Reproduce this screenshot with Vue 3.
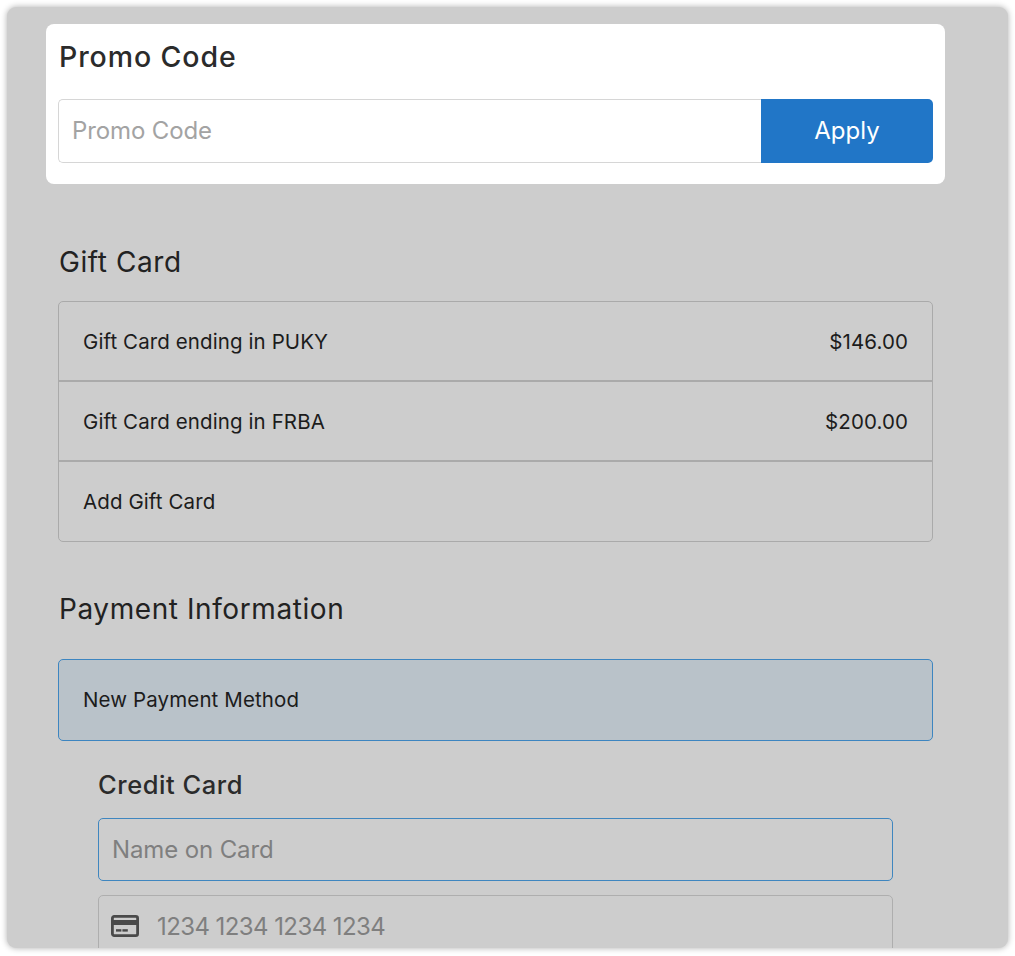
<script setup>
const giftCards = [
  { label: 'Gift Card ending in PUKY', amount: '$146.00' },
  { label: 'Gift Card ending in FRBA', amount: '$200.00' },
  { label: 'Add Gift Card', amount: '' }
]
</script>

<template>
  <div class="page">
    <main class="window">
      <section class="promo">
        <h2 class="promo-title">Promo Code</h2>
        <div class="promo-row">
          <div class="field promo-field"><span class="placeholder light">Promo Code</span></div>
          <button class="apply" type="button">Apply</button>
        </div>
      </section>

      <section class="content">
        <h2 class="section-title gift-title">Gift Card</h2>
        <ul class="gift-list">
          <li v-for="card in giftCards" :key="card.label" class="gift-row">
            <span>{{ card.label }}</span>
            <span>{{ card.amount }}</span>
          </li>
        </ul>

        <h2 class="section-title pay-title">Payment Information</h2>
        <div class="method">New Payment Method</div>

        <div class="card-form">
          <h3 class="card-title">Credit Card</h3>
          <div class="field focused"><span class="placeholder">Name on Card</span></div>
          <div class="field number">
            <svg class="card-icon" width="28" height="22" viewBox="0 0 28 22" aria-hidden="true">
              <rect x="1.4" y="1.4" width="25.2" height="19.2" rx="1.8" fill="none" stroke="#4a4a4a" stroke-width="2.8" />
              <rect x="2" y="5" width="24" height="5" fill="#4a4a4a" />
              <rect x="5" y="14.2" width="5.4" height="2.4" fill="#4a4a4a" />
              <rect x="11.4" y="14.2" width="5.4" height="2.4" fill="#4a4a4a" />
            </svg>
            <span class="placeholder digits">1234 1234 1234 1234</span>
          </div>
        </div>
      </section>
    </main>
  </div>
</template>

<style>
html, body { margin: 0; background: #fff; }
</style>

<style scoped>
* { box-sizing: border-box; }
.page {
  height: 956px;
  padding: 7px 7px 8px;
  overflow: hidden;
  font-family: Inter, "Liberation Sans", sans-serif;
}
.window {
  height: 941px;
  background: #cdcdcd;
  border-radius: 9px;
  box-shadow: 0 0 6px rgba(0, 0, 0, 0.32);
  overflow: hidden;
  padding: 17px 63px 0 39px;
}
.promo {
  height: 160px;
  background: #fff;
  border-radius: 8px;
  padding: 13px 12px 0;
}
.promo-title {
  margin: 0 0 0 1px;
  font-size: 28.5px;
  line-height: 40px;
  font-weight: 550;
  letter-spacing: 0.9px;
  color: #2b2b2b;
}
.promo-row { display: flex; margin-top: 22px; height: 64px; }
.apply {
  width: 172px;
  border: 0;
  padding: 0 0 2px;
  background: #2176c7;
  color: #fff;
  border-radius: 0 5px 5px 0;
  font: 400 24px Inter, sans-serif;
}
.content { padding: 0 12px; }
.field {
  display: flex;
  align-items: center;
  padding: 0 13px 2px;
  border: 1px solid #aeaeae;
  border-radius: 5px;
}
.promo-field {
  flex: 1;
  height: 64px;
  border-right: 0;
  border-radius: 5px 0 0 5px;
  border-color: #d6d6d6;
}
.placeholder { font-size: 24px; letter-spacing: -0.12px; color: #7f7f7f; }
.placeholder.light { color: #a3a3a3; }
.placeholder.digits { letter-spacing: -0.58px; }
.section-title {
  margin: 0 0 0 1px;
  font-size: 28px;
  line-height: 40px;
  font-weight: 400;
  letter-spacing: 0.58px;
  color: #222;
}
.gift-title { margin-top: 58px; }
.gift-list {
  list-style: none;
  margin: 19px 0 0;
  padding: 0;
  border: 1px solid #aaa;
  border-radius: 5px;
}
.gift-row {
  height: 80px;
  display: flex;
  align-items: center;
  justify-content: space-between;
  padding: 0 24px;
  font-size: 20.5px;
  letter-spacing: 0.1px;
  color: #1c1c1c;
  border-bottom: 2px solid #aaa;
}
.gift-row:last-child { height: 79px; border-bottom: 0; }
.pay-title { margin-top: 47px; }
.method {
  margin-top: 30px;
  height: 82px;
  display: flex;
  align-items: center;
  padding: 0 24px 2px;
  font-size: 20.5px;
  letter-spacing: 0.12px;
  color: #1c1c1c;
  background: #b9c2c9;
  border: 1px solid #3d85c0;
  border-radius: 5px;
}
.card-form { padding: 0 40px; }
.card-title {
  margin: 24px 0 0;
  font-size: 25.5px;
  line-height: 40px;
  font-weight: 450;
  letter-spacing: 0.55px;
  color: #2b2b2b;
}
.focused {
  margin-top: 13px;
  height: 63px;
  padding-bottom: 0;
  border: 1.5px solid #3f86bf;
}
.number { margin-top: 14px; height: 63px; gap: 18px; padding-left: 12px; padding-bottom: 0; }
.card-icon { flex: none; margin-bottom: 2px; }
</style>
